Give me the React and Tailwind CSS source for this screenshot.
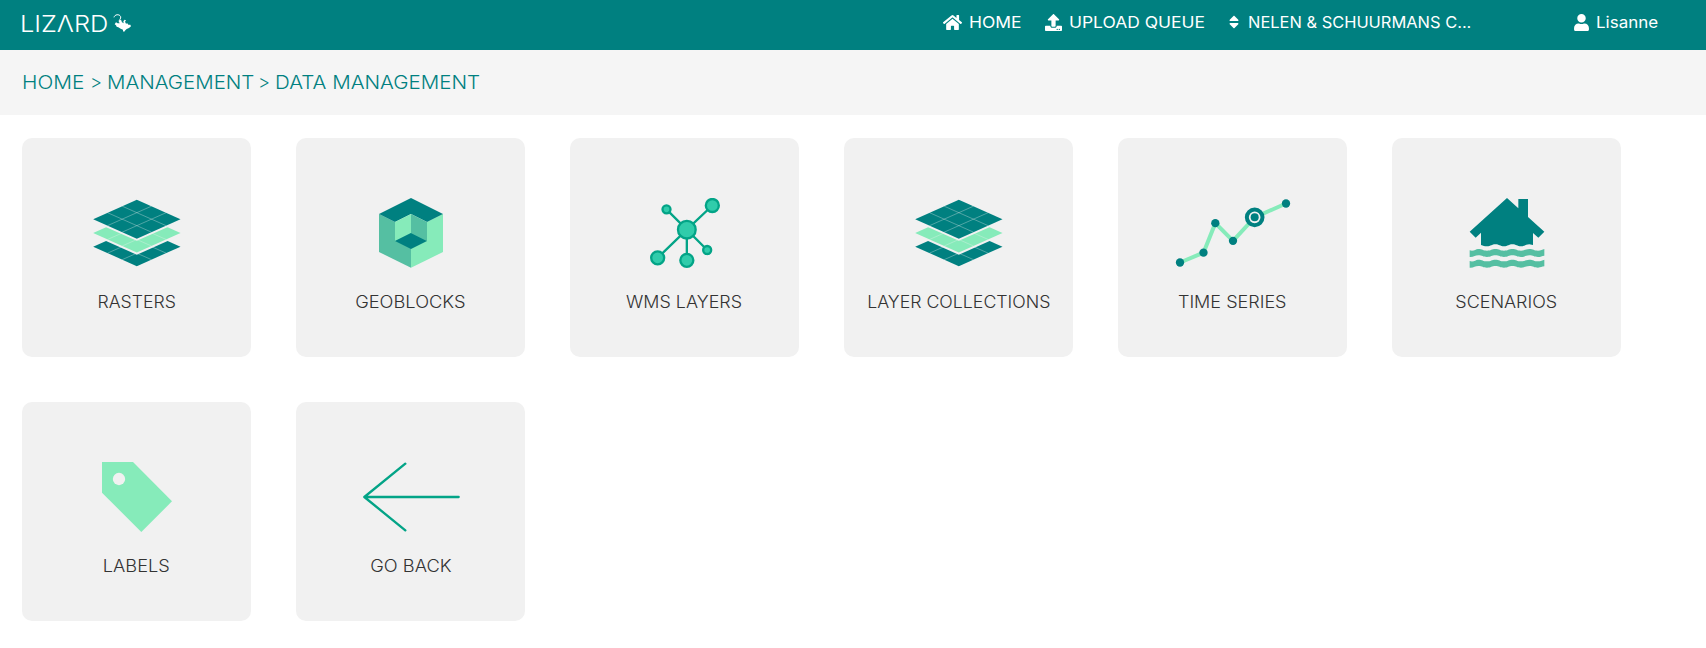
import { FaHome, FaUpload, FaSort, FaUser } from "react-icons/fa";

function LizardMark() {
  return (
    <svg className="h-[18px] w-[18px]" viewBox="0 0 54 54" fill="#fff">
      <path
        d="M3 10 C5 1 19 -1 23 8 C25 14 17 17 19 25"
        fill="none"
        stroke="#fff"
        strokeWidth="3"
      />
      <path d="M17 20 L24 17 L27 25 L32 28 L31 22 L35 17 L39 19 L36 23 L39 29 L43 28 L46 32 L52 32 L54 37 L48 42 L41 45 L37 49 L33 54 L30 51 L30 47 L23 44 L16 40 L11 38 L9 34 L5 31 L9 25 L14 28 L20 28 Z" />
    </svg>
  );
}

function LayersArt({ x }) {
  return (
    <svg className="h-[70px] w-[119px]" viewBox={`${x} 204 357 210`}>
      <g transform={`translate(${x + 179.5} 0)`}>
        {[
          ["#008080", 350],
          ["#86ebba", 309],
          ["#008080", 267.5],
        ].map(([fill, y]) => (
          <g key={y} transform={`translate(0 ${y})`}>
            <path d="M0 -66 L146 0 L0 65 L-146 0 Z" fill="#f1f1f1" />
            <path d="M0 -58.5 L131 0 L0 58.5 L-131 0 Z" fill={fill} />
            <path
              d="M-44 -39 L88 19.5 M-88 -19.5 L44 39 M44 -39 L-88 19.5 M88 -19.5 L-44 39"
              stroke="#f1f1f1"
              strokeOpacity="0.4"
              strokeWidth="2.5"
            />
          </g>
        ))}
      </g>
    </svg>
  );
}

function GeoblocksArt() {
  return (
    <svg className="h-[70px] w-[119px]" viewBox="183 204 357 210">
      <path d="M267 252 L363 300 L363 413.500 L267 366 Z" fill="#55bfa2" />
      <path d="M459 252 L363 300 L363 413.500 L459 366 Z" fill="#86ebba" />
      <path d="M363 204 L459 252 L411 276 L363 252 L315 276 L267 252 Z" fill="#008080" />
      <path d="M315 276 L363 252 L363 309 L315 333 Z" fill="#86ebba" />
      <path d="M411 276 L363 252 L363 309 L411 333 Z" fill="#55bfa2" />
      <path d="M363 309 L411 333 L363 357 L315 333 Z" fill="#008080" />
    </svg>
  );
}

function NetworkArt() {
  const nodes = [
    [457, 226.5, 19.5],
    [319.5, 238, 12],
    [380.5, 299, 26.5],
    [441.5, 360, 12],
    [293, 383.5, 19.5],
    [380.5, 391, 19.5],
  ];
  return (
    <svg className="h-[70px] w-[119px]" viewBox="195 204 357 210">
      <g stroke="#03a487" strokeWidth="7">
        <path d="M319.500 238 L441.500 360 M457 226.500 L380.500 299 L293 383.500 M380.500 299 V391" />
        {nodes.map(([cx, cy, r]) => (
          <circle key={cx + cy} cx={cx} cy={cy} r={r} fill="#30ccab" />
        ))}
      </g>
    </svg>
  );
}

function TimeSeriesArt() {
  const points = [
    [210, 397.5],
    [280.5, 368],
    [316, 279.5],
    [369, 332.5],
    [528, 220.5],
  ];
  return (
    <svg className="h-[70px] w-[119px]" viewBox="189 204 357 210">
      <path
        d="M210 397.500 L280.500 368 L316 279.500 L369 332.500 L434 262 L528 220.500"
        fill="none"
        stroke="#86ebba"
        strokeWidth="12"
      />
      {points.map(([cx, cy]) => (
        <circle key={cx} cx={cx} cy={cy} r="12.500" fill="#008080" />
      ))}
      <circle cx="434" cy="262" r="23.500" fill="#f1f1f1" stroke="#008080" strokeWidth="12" />
      <circle cx="434" cy="262" r="12" fill="#008080" />
    </svg>
  );
}

function FloodArt() {
  const wave =
    "M254 361 C267 366 272 356 280 357 C292 357 294 362 306 362 C318 362 320 357 331 357 C343 357 345 362 357 362 C369 362 371 357 382 357 C394 357 396 362 408 362 C420 362 422 357 433 357 C445 357 447 362 459 362 C468 362 472 358 478 357 V377 C470 377 468 381 459 381 C447 381 445 376 433 376 C422 376 420 381 408 381 C396 381 394 376 382 376 C371 376 369 381 357 381 C345 381 343 376 331 376 C320 376 318 381 306 381 C294 381 292 376 280 376 C270 376 266 382 254 381 Z";
  return (
    <svg className="h-[70px] w-[119px]" viewBox="186 204 357 210">
      <path
        d="M366 204 L400 235 V207 H429 V261 L478 305 L460 323 L444 309 V345 L433 343 C422 343 420 349 408 349 C396 349 394 343 382 343 C371 343 369 349 357 349 C345 349 343 343 331 343 C320 343 318 349 306 349 C298 349 295 347 288 345 V308 L272 323 L254 305 Z"
        fill="#008080"
      />
      <path d={wave} fill="#55bfa2" />
      <path d={wave} fill="#55bfa2" transform="translate(0 32)" />
    </svg>
  );
}

function LabelArt() {
  return (
    <svg className="h-[70px] w-[119px]" viewBox="201 201 357 210">
      <path d="M276 201 H369 L486 319 L394 411 L276 293 Z" fill="#86ebba" />
      <circle cx="327" cy="252" r="18.500" fill="#f1f1f1" />
    </svg>
  );
}

function BackArt() {
  return (
    <svg className="h-[70px] w-[119px]" viewBox="183 201 357 210">
      <path
        d="M346 206 L223 306 L346 406 M223 306 H506"
        fill="none"
        stroke="#03a487"
        strokeWidth="7"
        strokeLinecap="round"
        strokeLinejoin="round"
      />
    </svg>
  );
}

const tiles = [
  { label: "RASTERS", art: <LayersArt x={201} />, stretch: "scale-x-[1.04]" },
  { label: "GEOBLOCKS", art: <GeoblocksArt />, stretch: "scale-x-[1.075]" },
  { label: "WMS LAYERS", art: <NetworkArt />, stretch: "scale-x-[1.054]" },
  { label: "LAYER COLLECTIONS", art: <LayersArt x={192} />, stretch: "scale-x-[1.043]" },
  { label: "TIME SERIES", art: <TimeSeriesArt />, stretch: "scale-x-[1.06]" },
  { label: "SCENARIOS", art: <FloodArt />, stretch: "scale-x-[1.056]" },
  { label: "LABELS", art: <LabelArt />, stretch: "scale-x-[1.07]" },
  { label: "GO BACK", art: <BackArt />, stretch: "scale-x-[1.075]" },
];

export default function App() {
  return (
    <div className="min-h-[648px] bg-white font-['Inter',sans-serif]">
      <header className="flex h-[50px] items-center bg-[#008080] text-[16px] leading-none text-white">
        <a className="ml-[20px] flex w-[923px] items-center pb-[4px]" href="#">
          <span className="w-[93px] origin-left scale-x-[1.105] pt-[2px] text-[23px] font-light whitespace-nowrap">
            LIZΛRD
          </span>
          <LizardMark />
        </a>
        <nav className="flex items-center pb-[6px] whitespace-nowrap">
          <a className="flex w-[102px] items-center" href="#">
            <FaHome className="mr-[7px] h-[17px] w-[19px]" />
            <span className="origin-left scale-x-[1.09]">HOME</span>
          </a>
          <a className="flex w-[184px] items-center" href="#">
            <FaUpload className="mr-[7px] h-[17px] w-[17px]" />
            <span className="origin-left scale-x-[1.09]">UPLOAD QUEUE</span>
          </a>
          <a className="flex w-[345px] items-center" href="#">
            <FaSort className="mr-[9px] h-[16px] w-[10px]" />
            <span className="origin-left scale-x-[1.027]">NELEN &amp; SCHUURMANS C...</span>
          </a>
          <a className="flex items-center" href="#">
            <FaUser className="mr-[7px] h-[17px] w-[15px]" />
            <span className="origin-left scale-x-[1.06]">Lisanne</span>
          </a>
        </nav>
      </header>
      <div className="flex h-[65px] items-center bg-[#f5f5f5] pl-[22px] text-[18.500px] leading-none font-light whitespace-nowrap text-[#008080]">
        <a className="w-[68px] origin-left scale-x-[1.125]" href="#">HOME</a>
        <span className="w-[17px]">&gt;</span>
        <a className="w-[151px] origin-left scale-x-[1.105]" href="#">MANAGEMENT</a>
        <span className="w-[17px]">&gt;</span>
        <a className="origin-left scale-x-[1.11]" href="#">DATA MANAGEMENT</a>
      </div>
      <main className="flex flex-wrap gap-[45px] pt-[23px] pl-[22px]">
        {tiles.map((t) => (
          <a
            key={t.label}
            href="#"
            className="flex h-[219px] w-[229px] flex-col items-center rounded-[10px] bg-[#f1f1f1] pt-[60px] text-[#333]"
          >
            {t.art}
            <span className={`mt-[24px] text-[17px] leading-[20px] font-light whitespace-nowrap ${t.stretch}`}>
              {t.label}
            </span>
          </a>
        ))}
      </main>
    </div>
  );
}
